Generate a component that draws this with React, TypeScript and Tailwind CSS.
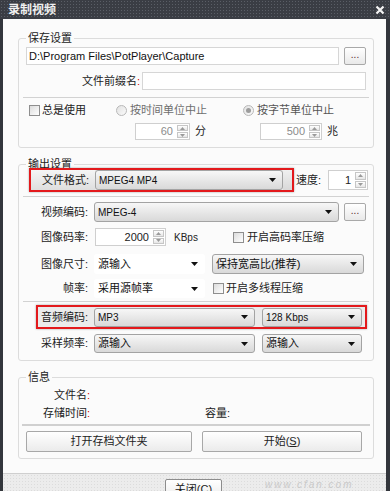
import React from "react";

const font = "font-['Liberation_Sans','Noto_Sans_CJK_SC',sans-serif]";

function Tri() {
  return (
    <svg width="7" height="4" viewBox="0 0 7 4" className="shrink-0">
      <path d="M0 0H7L3.5 4Z" fill="#111" />
    </svg>
  );
}

function Combo({ text, className = "", white = false, lat = false }: { text: string; className?: string; white?: boolean; lat?: boolean }) {
  return (
    <div
      className={`flex items-center justify-between rounded-[3px] pl-[3px] pr-[6px] ${
        white ? "border border-transparent bg-white" : "border border-[#a3a3a3] bg-linear-to-b from-[#f7f7f7] to-[#d9d9d9]"
      } ${className}`}
    >
      <span className={`${lat ? "text-[10px]" : ""} text-[#111]`}>{text}</span>
      <Tri />
    </div>
  );
}

function SpinBtn({ up }: { up: boolean }) {
  return (
    <div className="flex flex-1 items-center justify-center border border-[#c6c6c6] bg-linear-to-b from-white to-[#e6e6e6]">
      <svg width="5" height="3" viewBox="0 0 5 3">
        <path d={up ? "M0 3H5L2.5 0Z" : "M0 0H5L2.5 3Z"} fill="#9a9a9a" />
      </svg>
    </div>
  );
}

function Spin({ value, className = "", gray = false }: { value: string; className?: string; gray?: boolean }) {
  return (
    <div className={`flex border border-[#cfcfcf] bg-white ${className}`}>
      <div className={`flex flex-1 items-center justify-end pr-[4px] ${gray ? "text-[#8c8c8c]" : "text-[#222]"}`}>{value}</div>
      <div className="mr-[1px] flex w-[11px] flex-col gap-[1px] py-[1px]">
        <SpinBtn up />
        <SpinBtn up={false} />
      </div>
    </div>
  );
}

function Check() {
  return <div className="h-[11px] w-[11px] shrink-0 border border-[#8e8e8e] bg-linear-to-br from-[#dcdcdc] to-white" />;
}

function Radio({ on = false }: { on?: boolean }) {
  return (
    <div className="flex h-[11px] w-[11px] shrink-0 items-center justify-center rounded-full border border-[#b8b8b8] bg-linear-to-br from-[#e2e2e2] to-[#fafafa]">
      {on && <div className="h-[5px] w-[5px] rounded-full bg-[#9c9c9c]" />}
    </div>
  );
}

function Dots() {
  return (
    <div className="flex h-[18px] w-[22px] shrink-0 items-center justify-center rounded-[2px] border border-[#a9a9a9] bg-linear-to-b from-white to-[#e9e9e9] text-[10px] leading-none text-[#5a2d2d]">
      <span className="-mt-[3px]">...</span>
    </div>
  );
}

function Label({ children, w = "w-[68px]" }: { children: React.ReactNode; w?: string }) {
  return <div className={`${w} shrink-0 pr-[6px] text-right text-[#222]`}>{children}</div>;
}

function Sep({ className = "" }: { className?: string }) {
  return <div className={`h-px bg-[#d2d2d2] ${className}`} />;
}

function Group({ title, children, className = "" }: { title: string; children: React.ReactNode; className?: string }) {
  return (
    <fieldset className={`rounded-[3px] border border-[#dcdcdc] ${className}`}>
      <legend className="ml-[7px] px-[2px] text-[11px] leading-[13px] text-[#222]">{title}</legend>
      {children}
    </fieldset>
  );
}

export default function App() {
  return (
    <div className={`flex h-[491px] w-[390px] flex-col overflow-hidden bg-[#33363c] text-[11px] leading-[13px] ${font}`}>
      {/* title bar */}
      <div className="flex h-[19px] shrink-0 items-center justify-between bg-[#3a3d44] bg-[radial-gradient(circle,#5a5e66_0.7px,transparent_0.9px)] bg-size-[3px_3px] pl-[8px] pr-[5px]">
        <span className="text-[12px] font-bold leading-[14px] text-[#f0f0f0]">录制视频</span>
        <svg width="10" height="10" viewBox="0 0 10 10">
          <path d="M1.5 1.5L8.5 8.5M8.5 1.5L1.5 8.5" stroke="#f4f4f4" strokeWidth="2.2" />
        </svg>
      </div>

      {/* body */}
      <div className="ml-[3px] mr-[4px] flex flex-1 flex-col bg-[#fbfbfb]">
        <div className="flex h-[454px] shrink-0 flex-col pl-[15px] pr-[12px]">
          {/* 保存设置 */}
          <Group title="保存设置" className="mt-[13px] pb-[7px]">
            <div className="mt-[2px] flex h-[18px] items-center gap-[5px] px-[7px]">
              <div className="flex h-[18px] flex-1 items-center border border-[#d6d6d6] bg-white pl-[2px] text-[#111]">
                D:\Program Files\PotPlayer\Capture
              </div>
              <Dots />
            </div>
            <div className="mt-[7px] flex h-[18px] items-center px-[7px]">
              <div className="w-[116px] shrink-0 pr-[2px] text-right text-[#222]">
                文件前缀名<span className="text-[#d00000]">:</span>
              </div>
              <div className="h-[18px] flex-1 border border-[#d6d6d6] bg-white" />
            </div>
            <Sep className="mx-[4px] mt-[7px]" />
            <div className="mt-[5px] flex h-[15px] items-center px-[7px]">
              <div className="flex w-[87px] shrink-0 items-center pl-[3px]">
                <Check />
                <span className="ml-[2px] text-[#222]">总是使用</span>
              </div>
              <div className="flex w-[127px] shrink-0 items-center pl-[3px]">
                <Radio />
                <span className="ml-[3px] text-[#6e6e6e]">按时间单位中止</span>
              </div>
              <div className="flex items-center pl-[3px]">
                <Radio on />
                <span className="ml-[3px] text-[#555]">按字节单位中止</span>
              </div>
            </div>
            <div className="mt-[5px] flex h-[17px] items-center px-[7px]">
              <div className="w-[87px] shrink-0" />
              <div className="flex w-[127px] shrink-0 items-center pl-[22px]">
                <Spin value="60" gray className="h-[17px] w-[55px]" />
                <span className="ml-[5px] text-[#222]">分</span>
              </div>
              <div className="flex items-center pl-[20px]">
                <Spin value="500" gray className="h-[17px] w-[62px]" />
                <span className="ml-[5px] text-[#222]">兆</span>
              </div>
            </div>
          </Group>

          {/* 输出设置 */}
          <Group title="输出设置" className="mt-[10px] pb-[7px]">
            <div className="-mt-[3px] flex h-[24px] items-center">
              <div className="ml-[10px] flex h-[24px] w-[265px] items-center border-2 border-[#e3191c] bg-[#e9e9e9] shadow-[0_0_2px_rgba(0,0,0,0.35)]">
                <div className="flex h-[20px] w-[64px] items-center justify-end bg-linear-to-b from-[#f5f5f5] to-[#dedede] pr-[6px] text-[#222]">
                  文件格式:
                </div>
                <Combo text="MPEG4 MP4" lat className="h-[20px] w-[188px]" />
                <div className="h-[20px] flex-1 bg-linear-to-b from-[#f0f0f0] to-[#d8d8d8]" />
              </div>
              <span className="ml-[2px] text-[#222]">速度:</span>
              <Spin value="1" className="ml-[7px] h-[20px] w-[40px]" />
            </div>
            <Sep className="mx-[4px] mt-[4px]" />
            <div className="mt-[5px] flex h-[20px] items-center pl-[7px]">
              <Label>视频编码:</Label>
              <Combo text="MPEG-4" lat className="h-[20px] w-[245px]" />
              <div className="ml-[5px]">
                <Dots />
              </div>
            </div>
            <div className="mt-[6px] flex h-[18px] items-center pl-[7px]">
              <Label>图像码率:</Label>
              <div className="flex w-[139px] shrink-0 items-center">
                <Spin value="2000" className="ml-[1px] h-[18px] w-[71px]" />
                <span className="ml-[8px] text-[10px] text-[#222]">KBps</span>
              </div>
              <Check />
              <span className="ml-[3px] text-[#222]">开启高码率压缩</span>
            </div>
            <div className="mt-[8px] flex h-[20px] items-center pl-[7px]">
              <Label>图像尺寸:</Label>
              <Combo text="源输入" white className="h-[20px] w-[111px]" />
              <Combo text="保持宽高比(推荐)" className="ml-[7px] h-[20px] w-[152px]" />
            </div>
            <div className="mt-[5px] flex h-[19px] items-center pl-[7px]">
              <Label>帧率:</Label>
              <Combo text="采用源帧率" white className="h-[19px] w-[111px]" />
              <div className="ml-[8px]">
                <Check />
              </div>
              <span className="ml-[2px] text-[#222]">开启多线程压缩</span>
            </div>
            <Sep className="mx-[4px] mt-[3px]" />
            <div className="ml-[17px] mt-[3px] flex h-[24px] w-[331px] items-center border-2 border-[#e3191c] bg-[#ebebeb] shadow-[0_0_2px_rgba(0,0,0,0.35)]">
              <div className="w-[56px] shrink-0 pr-[6px] text-right text-[#222]">音频编码:</div>
              <Combo text="MP3" lat className="h-[19px] w-[161px]" />
              <Combo text="128 Kbps" lat className="ml-[7px] h-[19px] w-[100px]" />
            </div>
            <div className="mt-[5px] flex h-[19px] items-center pl-[7px]">
              <Label>采样频率:</Label>
              <Combo text="源输入" className="h-[19px] w-[161px]" />
              <Combo text="源输入" className="ml-[7px] h-[19px] w-[100px]" />
            </div>
          </Group>

          {/* 信息 */}
          <Group title="信息" className="mt-[10px] pb-[6px]">
            <div className="mt-[5px] flex h-[13px] items-center pl-[7px]">
              <Label w="w-[70px]">
                文件名<span className="text-[#d00000]">:</span>
              </Label>
            </div>
            <div className="mt-[5px] flex h-[13px] items-center pl-[7px]">
              <Label w="w-[70px]">
                存储时间<span className="text-[#d00000]">:</span>
              </Label>
              <span className="ml-[109px] text-[#222]">容量:</span>
            </div>
            <div className="mx-[3px] mt-[4px] h-[2px] bg-[#d0d0d0]" />
            <div className="mt-[5px] flex h-[21px] gap-[10px] px-[7px]">
              <div className="flex h-[21px] w-[166px] items-center justify-center rounded-[2px] border border-[#a8a8a8] bg-linear-to-b from-white to-[#ebebeb] text-[#222]">
                打开存档文件夹
              </div>
              <div className="flex h-[21px] w-[160px] items-center justify-center rounded-[2px] border border-[#a8a8a8] bg-linear-to-b from-white to-[#ebebeb] text-[#222]">
                开始(<span className="underline">S</span>)
              </div>
            </div>
          </Group>
        </div>

        {/* bottom strip */}
        <div className="relative flex flex-1 border-t border-[#cfcfcf] bg-[#ececec] bg-[radial-gradient(circle,#dcdcdc_0.7px,transparent_0.9px)] bg-size-[3px_3px]">
          <div className="ml-[162px] mt-[5px] flex h-[20px] w-[57px] items-start justify-center rounded-[2px] border border-[#8c8c8c] bg-linear-to-b from-white to-[#ececec] pt-[3px] text-[#222]">
            关闭(<span className="underline">C</span>)
          </div>
          <span className="absolute left-[262px] top-[4px] text-[10px] italic tracking-[2px] text-[#c9c9c9]">www.cfan.com</span>
        </div>
      </div>
    </div>
  );
}
